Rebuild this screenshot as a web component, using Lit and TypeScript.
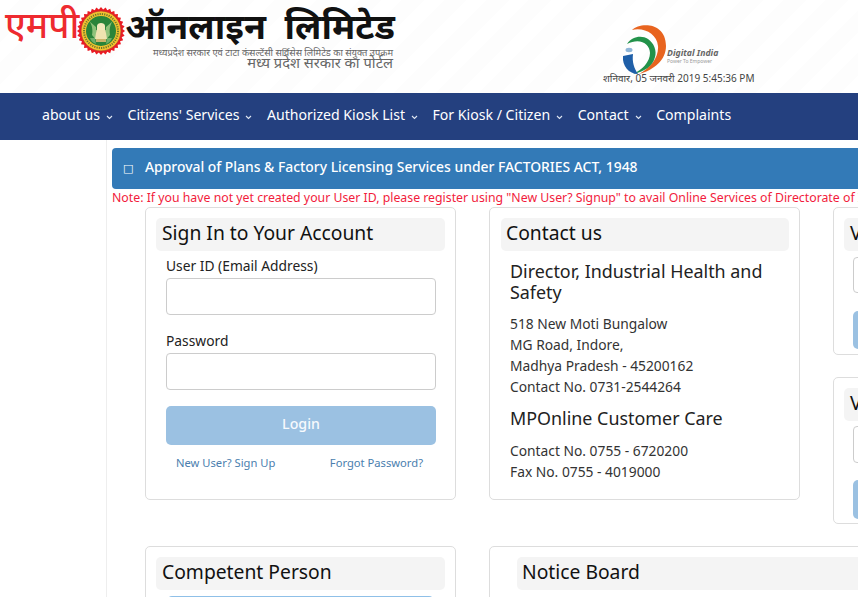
import { LitElement, html, css, svg } from "lit";
import { customElement } from "lit/decorators.js";

const chev = html`<svg class="chev" width="7" height="5" viewBox="0 0 7 5"><path d="M1 1l2.5 2.5L6 1" fill="none" stroke="#dfe6f2" stroke-width="1.1"/></svg>`;

const serrated = Array.from({ length: 64 }, (_, i) => {
  const a = (i / 64) * Math.PI * 2;
  const r = i % 2 ? 21.6 : 24;
  return `${(24 + r * Math.cos(a)).toFixed(2)},${(24 + r * Math.sin(a)).toFixed(2)}`;
}).join(" ");

const emblem = html`<svg class="emblem" width="48" height="48" viewBox="0 0 48 48">
  ${svg`<polygon points="${serrated}" fill="#ea1c24"/>`}
  <circle cx="24" cy="24" r="20" fill="#f2c230"/>
  <circle cx="24" cy="24" r="20" fill="none" stroke="#b8322a" stroke-width=".7"/>
  <circle cx="24" cy="24" r="17" fill="none" stroke="#6d7a2a" stroke-width="2" stroke-dasharray="1.2 1.1"/>
  <circle cx="24" cy="24" r="15" fill="#2a8439"/>
  <path d="M12 14c3 3 4 9 3 14l5 6-1-14zM36 14c-3 3-4 9-3 14l-5 6 1-14z" fill="#8fc27a"/>
  <path d="M13 31c1 3 3 5 6 6l-1-6zM35 31c-1 3-3 5-6 6l1-6z" fill="#6fae68"/>
  <path d="M20 19c0-4 8-4 8 0v4h-8z" fill="#f3e9bc"/>
  <path d="M19.5 23h9l1.5 9h-12z" fill="#efe3b0"/>
  <path d="M19 32h10v3H19z" fill="#cbb56b"/>
</svg>`;

const digital = html`<svg class="di" width="45" height="50" viewBox="0 0 45 50">
  <path d="M10 6C18-2 44-2 44 22C44 36 32 46 17 50C28 44 37 34 36 22C35 10 22 3 10 6Z" fill="#e8641f"/>
  <path d="M5 20C10 12 20 11 26 15C32 19 35 27 33 33C31 42 22 48 11 50C20 46 28 38 28 29C28 20 18 13 5 20Z" fill="#22924a"/>
  <path d="M1 32L11 30C10 38 12 44 16 50C7 50 0 42 1 32Z" fill="#1f5fa8"/>
  <ellipse cx="7" cy="26" rx="3.5" ry="2.2" fill="#8fb6d8"/>
</svg>`;

@customElement("app-root")
export class AppRoot extends LitElement {
  static styles = css`
    :host {
      display: block;
      width: 858px;
      height: 597px;
      overflow: hidden;
      background: #fff;
      font-family: "Noto Sans", sans-serif;
      color: #222;
    }
    .top {
      height: 93px;
      display: flex;
      background: repeating-linear-gradient(135deg, #fff 0 14px, #fdfdfd 14px 30px);
    }
    .logo {
      width: 600px;
      padding: 7px 0 0 5px;
      box-sizing: border-box;
      display: flex;
      align-items: flex-start;
    }
    .mp {
      color: #ee2a2f;
      font-size: 36.5px;
      font-weight: 500;
      line-height: 50px;
      white-space: nowrap;
      width: 72px;
      margin-top: -8px;
    }
    .emblem {
      flex: none;
    }
    .brand {
      display: flex;
      flex-direction: column;
      align-items: flex-end;
      margin-left: 1px;
      width: 269px;
    }
    .online {
      color: #111;
      font-size: 35.8px;
      font-weight: 700;
      line-height: 40px;
      white-space: nowrap;
      margin-top: -2px;
    }
    .sub {
      font-size: 9.35px;
      line-height: 9px;
      color: #666;
      white-space: nowrap;
      margin-top: 3px;
      margin-right: 2px;
    }
    .portal {
      font-size: 14.7px;
      line-height: 15px;
      color: #666;
      white-space: nowrap;
      margin-top: -2px;
      margin-right: 2px;
    }
    .india {
      flex: 1;
      display: flex;
      flex-direction: column;
      padding: 24px 0 0 3px;
    }
    .di-row {
      display: flex;
      align-items: center;
      margin-left: 19px;
      height: 50px;
    }
    .di-txt {
      margin-left: 0;
      padding-top: 13px;
      color: #666;
    }
    .di-name {
      font-size: 8.7px;
      line-height: 10px;
      font-weight: 700;
      font-style: italic;
    }
    .di-tag {
      font-size: 5px;
      line-height: 6px;
      color: #999;
    }
    .clock {
      font-size: 10px;
      line-height: 14px;
      color: #444;
      white-space: nowrap;
      margin-top: -3px;
    }
    nav {
      height: 47px;
      box-sizing: border-box;
      padding: 0 0 4px 42px;
      background: #24407f;
      display: flex;
      align-items: center;
      gap: 14.5px;
      color: #fff;
      font-size: 14.1px;
      white-space: nowrap;
    }
    nav span {
      display: flex;
      align-items: center;
      gap: 6px;
    }
    .chev {
      margin-top: 5px;
    }
    main {
      margin-left: 106px;
      border-left: 1px solid #eee;
      width: 900px;
      height: 457px;
      box-sizing: border-box;
      padding-top: 8px;
    }
    .banner {
      margin-left: 5px;
      height: 41px;
      box-sizing: border-box;
      padding: 0 0 4px 11px;
      background: #337ab7;
      border-radius: 4px;
      color: #fff;
      display: flex;
      align-items: center;
      font-size: 13.9px;
      font-weight: 500;
      white-space: nowrap;
      overflow: hidden;
    }
    .box {
      font-family: "DejaVu Sans", sans-serif;
      font-size: 11px;
      width: 22px;
      padding-top: 4px;
    }
    .note {
      margin-left: 5px;
      color: #f21c3c;
      font-size: 12.3px;
      line-height: 18px;
      white-space: nowrap;
    }
    .row {
      display: grid;
      grid-template-columns: 311px 311px 311px;
      column-gap: 33px;
      align-items: start;
      margin-left: 38px;
    }
    .row.two {
      grid-template-columns: 311px 600px;
      margin-top: 22px;
    }
    .card {
      border: 1px solid #ddd;
      border-radius: 5px;
      padding: 10px;
      box-sizing: border-box;
      min-width: 0;
      height: 293px;
    }
    .stack {
      display: flex;
      flex-direction: column;
      gap: 22px;
    }
    .h1row {
      height: 33px;
      background: #f4f4f4;
      border-radius: 5px;
      font-size: 19.3px;
      line-height: 30px;
      padding-left: 6px;
      color: #111;
      white-space: nowrap;
      overflow: hidden;
    }
    .shift {
      margin-left: 1px;
      padding-left: 5px;
    }
    .form {
      padding: 0 9px 0 10px;
    }
    label {
      display: block;
      font-size: 13.8px;
      line-height: 20px;
      margin-top: 5px;
      color: #222;
    }
    .form label + .inp {
      margin-top: 2px;
    }
    .inp {
      height: 37px;
      border: 1px solid #ccc;
      border-radius: 4px;
      box-sizing: border-box;
      background: #fff;
    }
    .pass {
      margin-top: 16px;
    }
    .btn {
      height: 39px;
      margin-top: 16px;
      box-sizing: border-box;
      padding-bottom: 4px;
      background: #9bc1e2;
      border-radius: 5px;
      color: #f7fafd;
      display: flex;
      align-items: center;
      justify-content: center;
      font-size: 14.2px;
      font-weight: 500;
    }
    .links {
      display: flex;
      justify-content: space-between;
      padding: 10px 13px 0 10px;
      font-size: 11.2px;
      line-height: 16px;
      color: #4a7eae;
    }
    .contact {
      padding: 0 10px;
    }
    h3 {
      margin: 0;
      font-weight: 400;
      font-size: 17.9px;
      line-height: 21px;
      color: #222;
    }
    .contact h3:first-child {
      margin-top: 10px;
    }
    p {
      margin: 10px 0 11px;
      font-size: 13.8px;
      line-height: 21px;
      color: #333;
    }
    p.last {
      margin-top: 11px;
    }
    .card.small {
      height: auto;
      padding-bottom: 4px;
    }
    .small .form {
      padding: 5px 0 0 9px;
    }
    .small .btn {
      margin-top: 17px;
      width: 300px;
    }
    .small .inp {
      width: 300px;
    }
    .card.small.first {
      padding-bottom: 5px;
    }
    .first .form {
      padding-top: 6px;
    }
    .first .inp {
      height: 36px;
    }
    .first .btn {
      height: 38px;
      margin-top: 18px;
    }
    .notice .h1row {
      margin-left: 17px;
      padding-left: 5px;
    }
    .blue {
      height: 30px;
      margin: 6px 12px 0;
      background: #8fc0e8;
      border-radius: 4px;
    }
  `;

  render() {
    return html`
      <div class="top">
        <div class="logo">
          <div class="mp" lang="hi">एमपी</div>
          ${emblem}
          <div class="brand" lang="hi">
            <div class="online">ऑनलाइन&nbsp; लिमिटेड</div>
            <div class="sub">मध्यप्रदेश सरकार एवं टाटा कंसल्टेंसी सर्विसेस लिमिटेड का संयुक्त उपक्रम</div>
            <div class="portal">मध्य प्रदेश सरकार का पोर्टल</div>
          </div>
        </div>
        <div class="india">
          <div class="di-row">
            ${digital}
            <div class="di-txt">
              <div class="di-name">Digital India</div>
              <div class="di-tag">Power To Empower</div>
            </div>
          </div>
          <div class="clock" lang="hi">शनिवार, 05 जनवरी 2019 5:45:36 PM</div>
        </div>
      </div>
      <nav>
        <span>about us ${chev}</span>
        <span>Citizens' Services ${chev}</span>
        <span>Authorized Kiosk List ${chev}</span>
        <span>For Kiosk / Citizen ${chev}</span>
        <span>Contact ${chev}</span>
        <span>Complaints</span>
      </nav>
      <main>
        <div class="banner"><span class="box">□</span>Approval of Plans &amp; Factory Licensing Services under FACTORIES ACT, 1948</div>
        <div class="note">Note: If you have not yet created your User ID, please register using "New User? Signup" to avail Online Services of Directorate of Industrial Health and Safety</div>
        <div class="row">
          <section class="card">
            <div class="h1row">Sign In to Your Account</div>
            <div class="form">
              <label>User ID (Email Address)</label>
              <div class="inp"></div>
              <label class="pass">Password</label>
              <div class="inp"></div>
              <div class="btn">Login</div>
              <div class="links"><span>New User? Sign Up</span><span>Forgot Password?</span></div>
            </div>
          </section>
          <section class="card">
            <div class="h1row shift">Contact us</div>
            <div class="contact">
              <h3>Director, Industrial Health and Safety</h3>
              <p>518 New Moti Bungalow<br />MG Road, Indore,<br />Madhya Pradesh - 45200162<br />Contact No. 0731-2544264</p>
              <h3>MPOnline Customer Care</h3>
              <p class="last">Contact No. 0755 - 6720200<br />Fax No. 0755 - 4019000</p>
            </div>
          </section>
          <div class="stack">
            <section class="card small first">
              <div class="h1row">Verify Certificate</div>
              <div class="form"><div class="inp"></div><div class="btn">Verify</div></div>
            </section>
            <section class="card small">
              <div class="h1row">Verify Licence</div>
              <div class="form"><div class="inp"></div><div class="btn">Verify</div></div>
            </section>
          </div>
        </div>
        <div class="row two">
          <section class="card">
            <div class="h1row">Competent Person</div>
            <div class="blue"></div>
          </section>
          <section class="card notice">
            <div class="h1row">Notice Board</div>
          </section>
        </div>
      </main>
    `;
  }
}
